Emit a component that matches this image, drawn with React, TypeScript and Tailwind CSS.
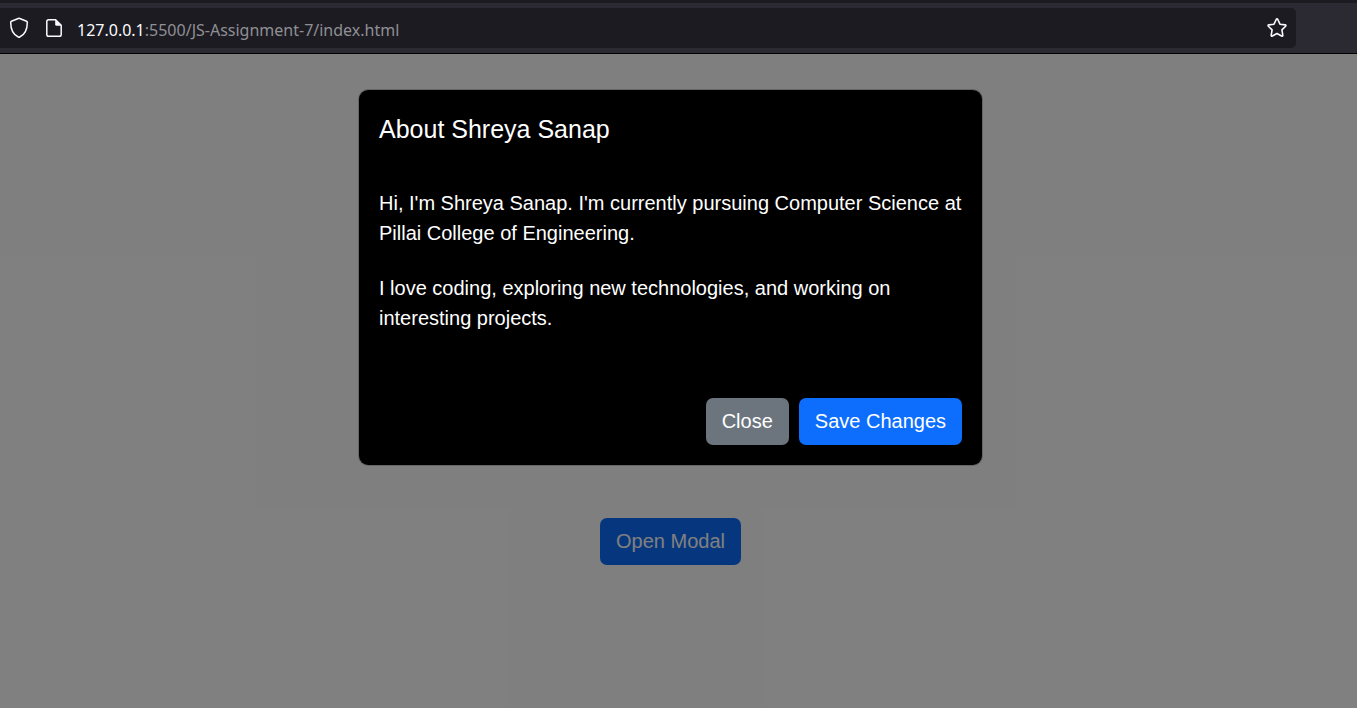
import { useState } from "react";

function ShieldIcon() {
  return (
    <svg width="20" height="22" viewBox="0 0 20 22" fill="none" stroke="#fbfbfe" strokeWidth="1.5" strokeLinejoin="round" aria-hidden="true">
      <path d="M9.300 1.500Q10 1.200 10.700 1.500L17.600 4.300Q18.300 4.600 18.300 5.400C18.300 12.600 15.600 17.600 10.700 20Q10 20.400 9.300 20C4.400 17.600 1.700 12.600 1.700 5.400Q1.700 4.600 2.400 4.300Z" />
    </svg>
  );
}

function PageIcon() {
  return (
    <svg width="16" height="18" viewBox="0 0 16 18" fill="none" aria-hidden="true">
      <path d="M9.6.8H2.6Q.8.8.8 2.6v12.8q0 1.8 1.8 1.8h10.8q1.8 0 1.8-1.8V6.4Z" stroke="#fbfbfe" strokeWidth="1.5" strokeLinejoin="round" />
      <path d="M9.2.8V5.6q0 1.2 1.2 1.2h4.8Z" fill="#fbfbfe" />
    </svg>
  );
}

function StarIcon() {
  return (
    <svg width="20" height="20" viewBox="0 0 20 20" fill="none" stroke="#fbfbfe" strokeWidth="1.6" strokeLinejoin="round" aria-hidden="true">
      <path d="M9.2 1.5Q10 .3 10.8 1.5L13 6.2l5.1.7q1.3.3.5 1.3l-3.7 3.7 .9 5.2q.1 1.4-1.2.9L10 15.5 5.4 18q-1.3.5-1.2-.9l.9-5.2L1.4 8.200q-.8-1 .5-1.3L7 6.200Z" />
    </svg>
  );
}

function BrowserBar() {
  return (
    <header className="border-b border-black bg-[#2b2a33] pb-[5px]">
      <div className="h-[3px] bg-[#1c1b22]" />
      <div className="mt-[5px] mr-[61px] flex h-10 items-center rounded-r-[5px] bg-[#1c1b22] pr-[9px] pl-[9px]">
        <button type="button" aria-label="Tracking protection"><ShieldIcon /></button>
        <button type="button" aria-label="Site information" className="ml-[17px]"><PageIcon /></button>
        <a href="#" className="ml-[15px] pt-1 font-['Noto_Sans',sans-serif] text-base leading-6 text-[#8f8f94]">
          <span className="text-[#fbfbfe]">127.0.0.1</span>:5500/JS-Assignment-7/index.html
        </a>
        <button type="button" aria-label="Bookmark this page" className="ml-auto"><StarIcon /></button>
      </div>
    </header>
  );
}

const buttonBase = "rounded-[7px] px-4 py-2 leading-[31px] text-white";

export default function App() {
  const [open, setOpen] = useState(true);
  return (
    <div className="flex min-h-screen flex-col bg-white font-['Liberation_Sans',Arial,sans-serif] text-xl">
      <BrowserBar />
      <main className="relative flex-1 pr-4">
        <div className="flex justify-center pt-[464px]">
          <button type="button" onClick={() => setOpen(true)} className={`${buttonBase} bg-[#0d6efd]`}>Open Modal</button>
        </div>
        {open && (
          <div className="absolute inset-0 bg-black/50 pt-[35px] pr-4">
            <section role="dialog" aria-labelledby="modal-title" className="mx-auto max-w-[625px] rounded-[10px] border border-black/20 bg-black bg-clip-padding text-white">
              <h1 id="modal-title" className="p-5 text-[25px] leading-[38px]">About Shreya Sanap</h1>
              <div className="flex flex-col gap-[25px] px-5 pt-5 leading-[30px]">
                <p>Hi, I'm Shreya Sanap. I'm currently pursuing Computer Science at Pillai College of Engineering.</p>
                <p>I love coding, exploring new technologies, and working on interesting projects.</p>
              </div>
              <footer className="flex justify-end gap-[10px] px-5 pt-[65px] pb-5">
                <button type="button" onClick={() => setOpen(false)} className={`${buttonBase} bg-[#6c757d]`}>Close</button>
                <button type="button" className={`${buttonBase} bg-[#0d6efd]`}>Save Changes</button>
              </footer>
            </section>
          </div>
        )}
      </main>
    </div>
  );
}
